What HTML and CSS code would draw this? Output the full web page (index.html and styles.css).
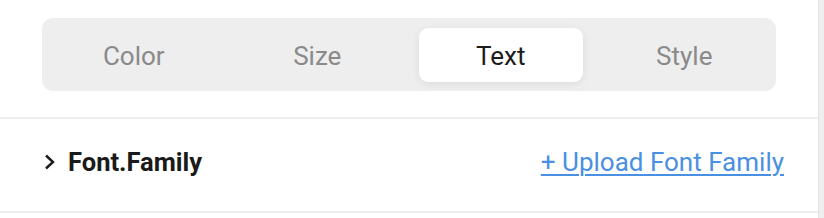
FILE: index.html
```html
<!DOCTYPE html>
<html>
<head>
<meta charset="utf-8">
<link rel="stylesheet" href="styles.css">
</head>
<body>
<div class="page">
  <div class="panel">
    <div class="tabs-wrap">
      <div class="tabs">
        <div class="tab"><span class="tab-label">Color</span></div>
        <div class="tab"><span class="tab-label">Size</span></div>
        <div class="tab active"><span class="tab-label">Text</span></div>
        <div class="tab"><span class="tab-label">Style</span></div>
      </div>
    </div>
    <div class="row">
      <div class="row-title">
        <svg class="chev" width="12" height="16" viewBox="0 0 12 16"><path d="M2 1.5 L9 8 L2 14.5" fill="none" stroke="#1a1a1a" stroke-width="2.4"/></svg>
        <span>Font.Family</span>
      </div>
      <a class="upload" href="#">+ Upload Font Family</a>
    </div>
  </div>
  <div class="scrollbar"></div>
</div>
</body>
</html>
```
FILE: styles.css
```css
html, body {
  margin: 0;
  padding: 0;
  background: #ffffff;
}
body {
  font-family: Roboto, "Liberation Sans", sans-serif;
}
.page {
  display: flex;
  width: 824px;
  height: 218px;
  overflow: hidden;
}
.panel {
  width: 818px;
  flex: none;
}
.scrollbar {
  width: 6px;
  flex: none;
  background: #efefef;
  border-left: 1px solid #e2e2e2;
  box-sizing: border-box;
}
.tabs-wrap {
  padding: 18px 42px 26px 42px;
  border-bottom: 2px solid #eeeeee;
}
.tabs {
  display: flex;
  height: 73px;
  background: #eeeeee;
  border-radius: 11px;
  width: 734px;
}
.tab {
  width: 25%;
  display: flex;
  box-sizing: border-box;
}
.tab-label {
  flex: 1;
  display: flex;
  align-items: center;
  justify-content: center;
  font-size: 26px;
  color: #8a8a8a;
  padding-top: 2px;
}
.tab.active {
  padding: 10px 10px 9px 10px;
}
.tab.active .tab-label {
  background: #ffffff;
  border-radius: 9px;
  color: #1c1c1c;
  box-shadow: 0 2px 8px rgba(0, 0, 0, 0.08);
  padding-top: 1px;
}
.row {
  display: flex;
  align-items: center;
  justify-content: space-between;
  height: 94px;
  padding: 0 34px 6px 44px;
  box-sizing: border-box;
  border-bottom: 2px solid #eeeeee;
}
.row-title {
  display: flex;
  align-items: center;
  gap: 12px;
  font-size: 25.5px;
  font-weight: 700;
  color: #1a1a1a;
}
.chev {
  display: block;
}
.upload {
  font-size: 26px;
  color: #4a90e2;
  text-decoration: underline;
  text-underline-offset: 3px;
  text-decoration-thickness: 2px;
}
```
